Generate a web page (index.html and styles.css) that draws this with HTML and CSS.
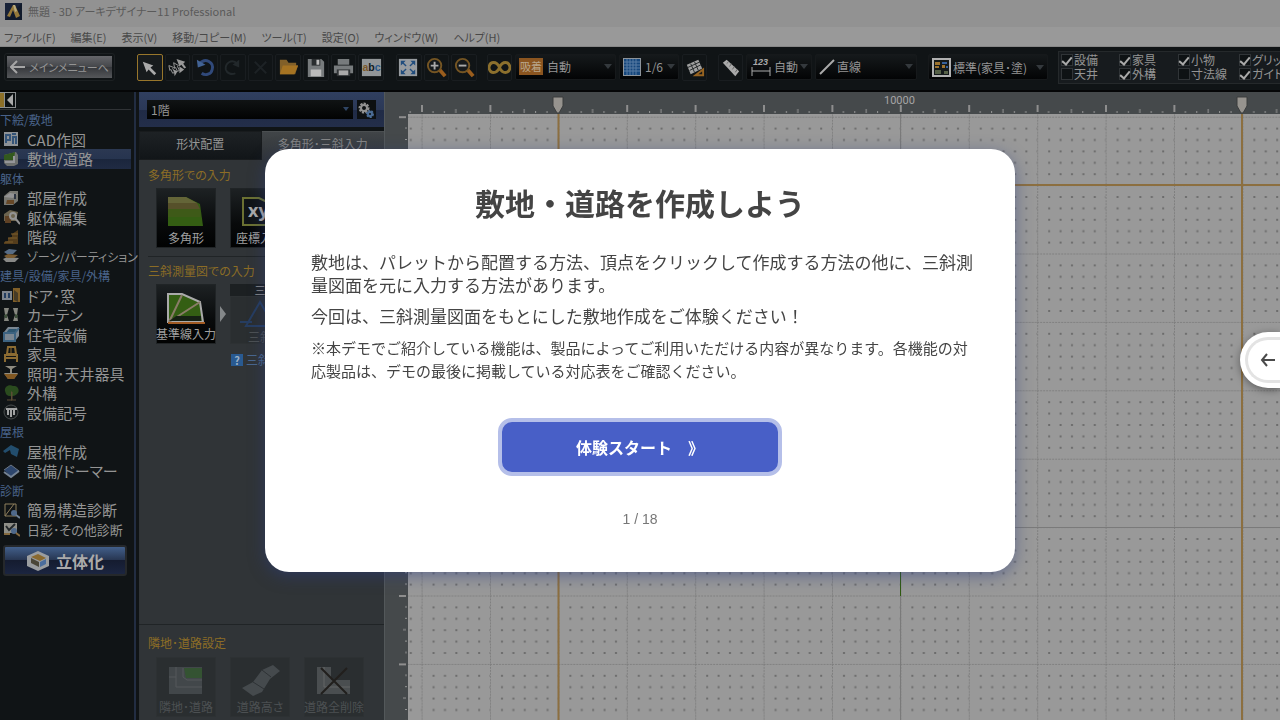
FILE: index.html
```html
<!DOCTYPE html>
<html lang="ja">
<head>
<meta charset="utf-8">
<meta name="viewport" content="width=device-width, initial-scale=1">
<title>無題 - 3D アーキデザイナー11 Professional</title>
<link rel="stylesheet" href="styles.css">
</head>
<body>
<div class="app">
  <header class="titlebar">
    <svg width="17" height="17" viewBox="0 0 17 17"><rect width="17" height="17" fill="#111a2b"/><path d="M0 0h17L0 17z" fill="#182238"/><path d="M8 2 2 13l3 1 3-7 3 8 4-2L10 2z" fill="#94783a"/><path d="m8 2 2 0 2 6-2 1z" fill="#b8ab80"/></svg>
    <span>無題 - 3D アーキデザイナー11 Professional</span>
  </header>
  <nav class="menubar">
    <button>ファイル(F)</button><button>編集(E)</button><button>表示(V)</button><button>移動/コピー(M)</button><button>ツール(T)</button><button>設定(O)</button><button>ウィンドウ(W)</button><button>ヘルプ(H)</button>
  </nav>
  <div class="toolbar">
    <div class="home-frame"><button class="home"><svg width="15" height="14" viewBox="0 0 15 14"><path d="M7 1 1 7l6 6M1 7h14" fill="none" stroke="#a5a5a5" stroke-width="2"/></svg>メインメニューへ</button></div>
    <div class="tools tools-main">
      <button class="tool on" aria-label="選択"><svg viewBox="0 0 24 24"><path d="m5 6 11 4-3 2 6 6-2 2-6-6-2 3z" fill="#aaa"/></svg></button>
      <button class="tool" aria-label="複数選択"><svg viewBox="0 0 24 24"><path d="m3 10 5 2-1 1 2 4-2 1-2-4-1 1zM8 7l5 3-1 1 2 4-2 1-2-4-1 1z" fill="none" stroke="#999"/><path d="m11 3 9 3-2 2 3 4-2 1-3-4-2 2zM8 14l4 2-3 5zM14 11l5 3-5 4z" fill="#999"/></svg></button>
      <button class="tool" aria-label="元に戻す"><svg viewBox="0 0 24 24"><path d="M6 8c6-7 15-1 13 6-1 5-7 7-11 4" fill="none" stroke="#30497a" stroke-width="3"/><path d="m3 4 1 8 8-3z" fill="#426395"/></svg></button>
      <button class="tool" aria-label="やり直し"><svg viewBox="0 0 24 24"><path d="M17 8C11 2 4 8 5 14c1 4 6 6 10 4" fill="none" stroke="#22282b" stroke-width="2"/><path d="m19 4 0 8-7-3z" fill="#22282b"/></svg></button>
      <button class="tool" aria-label="削除"><svg viewBox="0 0 24 24"><path d="m6 6 12 12M18 6 6 18" stroke="#1d2225" stroke-width="2"/></svg></button>
      <button class="tool" aria-label="開く"><svg viewBox="0 0 24 24"><path d="M3 19V4h7l2 3h8v3h2l-3 9z" fill="#826029"/><path d="m3 19 3-9h16l-4 9z" fill="#a57322"/></svg></button>
      <button class="tool" aria-label="保存"><svg viewBox="0 0 24 24"><path d="M4 3h14l3 3v16H4z" fill="#777b7d"/><path d="M8 3h9v7H8z" fill="#292d2f"/><path d="M13 4h3v5h-3zM7 14h11v7H7z" fill="#bbb"/></svg></button>
      <button class="tool" aria-label="印刷"><svg viewBox="0 0 24 24"><path d="M6 3h12v6H6zM2 10h20v8H2z" fill="#777b7d"/><path d="M5 14h14v7H5z" fill="#303436"/><path d="M7 15h10v5H7z" fill="#aaa"/></svg></button>
      <button class="tool" aria-label="文字"><svg viewBox="0 0 24 24"><rect x="2" y="3" width="20" height="18" fill="#929698"/><text x="12" y="16" text-anchor="middle" font-size="11" font-weight="bold" font-family="Liberation Sans"><tspan fill="#7c5828">a</tspan><tspan fill="#111b20">b</tspan><tspan fill="#28588a">c</tspan></text></svg></button>
    </div>
    <div class="tools tools-zoom">
      <button class="tool" aria-label="全体表示"><svg viewBox="0 0 24 24"><rect x="2" y="3" width="19" height="18" fill="#989ca0"/><path d="M4 10V5h5L7 7l3 3-1 1-3-3zM19 10V5h-5l2 2-3 3 1 1 3-3zM4 14v5h5l-2-2 3-3-1-1-3 3zM19 14v5h-5l2-2-3-3 1-1 3 3z" fill="#214d7d"/></svg></button>
      <button class="tool" aria-label="拡大"><svg viewBox="0 0 24 24"><path d="m15 14 6 7" stroke="#9a5d1d" stroke-width="4"/><circle cx="10" cy="10" r="7" fill="#161a1c" stroke="#755523" stroke-width="2"/><path d="M6 10h8M10 6v8" stroke="#aaa" stroke-width="2"/></svg></button>
      <button class="tool" aria-label="縮小"><svg viewBox="0 0 24 24"><path d="m15 14 6 7" stroke="#9a5d1d" stroke-width="4"/><circle cx="10" cy="10" r="7" fill="#161a1c" stroke="#755523" stroke-width="2"/><path d="M6 10h8" stroke="#aaa" stroke-width="2"/></svg></button>
    </div>
    <div class="snap">
      <button class="tool" aria-label="連続"><svg viewBox="0 0 24 24"><path d="M12 12C9 5 2 5 1 12c1 7 8 7 11 0s10-7 11 0c-1 7-8 7-11 0z" fill="none" stroke="#8c702d" stroke-width="3"/></svg></button>
      <div class="combo combo-snap"><b class="badge">吸着</b><select aria-label="吸着"><option>自動</option></select></div>
      <div class="combo combo-grid"><svg width="18" height="18" viewBox="0 0 18 18"><rect width="18" height="18" fill="#8d949b"/><rect x="1" y="1" width="16" height="16" fill="#16477c"/><path d="M4 1v16M7 1v16M10 1v16M13 1v16M1 4h16M1 7h16M1 10h16M1 13h16" stroke="#587da3"/></svg><select aria-label="グリッド"><option>1/6</option></select></div>
      <button class="tool" aria-label="グリッド回転"><svg viewBox="0 0 24 24"><path d="m4 9 12-5 4 9-12 6z" fill="#a0a0a0"/><path d="m5 12 13-6M7 15l12-6M8 8l4 9M12 6l4 9" stroke="#25292b"/><path d="M13 20h8v-6z" fill="#16191b" stroke="#976321" stroke-width="2"/></svg></button>
    </div>
    <div class="measure">
      <button class="tool" aria-label="定規"><svg viewBox="0 0 24 24"><path d="m4 7 4-3 13 12-4 5z" fill="#aaa"/><path d="m10 6-2 2m5 0-2 3m5 0-2 3m5 0-2 3" stroke="#666"/></svg></button>
      <div class="combo combo-dim"><svg width="22" height="20" viewBox="0 0 22 20"><text x="3" y="8" font-size="9" font-style="italic" font-weight="bold" font-family="Liberation Sans" fill="#aaa">123</text><path d="M2 10v9M20 10v9M2 14h18" stroke="#aaa"/></svg><select aria-label="寸法"><option>自動</option></select></div>
      <div class="combo combo-line"><svg width="16" height="16" viewBox="0 0 16 16"><path d="M1 15 15 1" stroke="#aaa" stroke-width="2"/></svg><select aria-label="線種"><option>直線</option></select></div>
    </div>
    <div class="combo combo-view"><svg width="19" height="19" viewBox="0 0 19 19"><rect x="1" y="1" width="17" height="17" fill="#14191a" stroke="#b1b1b1" stroke-width="2"/><path d="M3 4h5v3H3zM3 8h4v2H3zM10 7h3v3h-3z" fill="#9e742f"/><path d="M10 4h5v2h-5zM14 8h2v2h-2z" fill="#36619c"/><path d="M3 12h6v4H3zM12 13h4v3h-4z" fill="#566147"/></svg><select aria-label="表示設定"><option>標準(家具･塗)</option></select></div>
    <fieldset class="checks" aria-label="表示要素">
      <label><input type="checkbox" checked>設備</label><label><input type="checkbox" checked>家具</label><label><input type="checkbox" checked>小物</label><label><input type="checkbox" checked>グリッド</label>
      <label><input type="checkbox">天井</label><label><input type="checkbox" checked>外構</label><label><input type="checkbox">寸法線</label><label><input type="checkbox" checked>ガイド</label>
    </fieldset>
  </div>

  <div class="work">
    <aside class="sidebar">
      <div class="fold"><button aria-label="折りたたむ"><svg width="16" height="16" viewBox="0 0 16 16"><rect width="16" height="16" fill="#8b8e90"/><rect y="1" width="4" height="14" fill="#8d7028"/><rect x="5" y="1" width="10" height="14" fill="#0c1012"/><path d="m13 2-6 6 6 6z" fill="#aaa"/></svg></button></div>
      <div class="steps">
      <h2>下絵/敷地</h2>
      <button class="item"><svg viewBox="0 0 18 18"><path d="M2 2h14v14H2z" fill="#a4a9ad"/><path d="M4 13V5h4v5H4M11 14V7h3v7M10 4h4" fill="none" stroke="#3b608a" stroke-width="2"/></svg>CAD作図</button>
      <button class="item active"><svg viewBox="0 0 18 18"><path d="m2 5 12-3 2 3v9l-4 2H5l-3-3z" fill="#7c7d77"/><path d="m2 5 11-3-1 8H2z" fill="#356016"/><path d="M3 12h9V6" fill="none" stroke="#aaa" stroke-width="2"/></svg>敷地/道路</button>
      <h2>躯体</h2>
      <button class="item"><svg viewBox="0 0 18 18"><path d="m2 7 6-5h8v10l-5 4H2z" fill="#8a8981"/><path d="m2 8 6-4 7 1-4 4z" fill="#aaa"/><path d="M5 11h7v4H4z" fill="#77522b"/><path d="M13 5v5" stroke="#343d4b" stroke-width="2"/></svg>部屋作成</button>
      <button class="item"><svg viewBox="0 0 18 18"><path d="m2 6 6-4 8 2-2 9H2z" fill="#7d735a"/><path d="M3 8h6v7H3z" fill="#6d4927"/><circle cx="11" cy="8" r="3" fill="none" stroke="#aaa" stroke-width="2"/><path d="m13 10 5 6" stroke="#aaa" stroke-width="2"/></svg>躯体編集</button>
      <button class="item"><svg viewBox="0 0 18 18"><path d="M2 16V14l4-1v-3l4-1V6l6-4v14z" fill="#60451e"/><path d="M3 14h8M6 10h9M9 6h7" stroke="#8e6a30" stroke-width="1"/></svg>階段</button>
      <button class="item long"><svg viewBox="0 0 18 18"><path d="m1 12 4-2 12 1-4 4H4z" fill="#9d9e9b"/><path d="m2 9 4-2 10 1-4 3H5z" fill="#8d6938"/><path d="m2 5 5-3 8 1-4 4H5z" fill="#647c99"/></svg>ゾーン/パーティション</button>
      <h2>建具/設備/家具/外構</h2>
      <button class="item"><svg viewBox="0 0 18 18"><path d="M0 5h10v9H0z" fill="#9098a2"/><path d="M2 7h2v5H2zM6 7h2v5H6z" fill="#26456d"/><path d="M11 2h7v14h-7z" fill="#936c2c"/><path d="m12 4 4 3v9l-4-2z" fill="#50422a"/></svg>ドア･窓</button>
      <button class="item"><svg viewBox="0 0 18 18"><path d="M2 2h5l-2 7 2 6H2l1-6zM11 2h5l-1 7 1 6h-5l2-6z" fill="#9b9c93"/><path d="m2 9 3-1v4H3zM16 9l-3-1v4h2z" fill="#455b42"/></svg>カーテン</button>
      <button class="item"><svg viewBox="0 0 18 18"><path d="m2 7 4-5h11v9l-4 5H2z" fill="#8e9ca8"/><path d="m4 8 3-4h8l-2 4z" fill="#33617f"/><path d="M2 8h11v8H2zM13 8l4-5" fill="none" stroke="#467194" stroke-width="2"/></svg>住宅設備</button>
      <button class="item"><svg viewBox="0 0 18 18"><path d="M6 2h7l1 7H5zM3 10h12v3H3zM3 13v4M15 13v4" fill="none" stroke="#a17b38" stroke-width="2"/><path d="M9 3v6" stroke="#a17b38"/></svg>家具</button>
      <button class="item"><svg viewBox="0 0 18 18"><path d="M3 2h12l-5 3v4h6l-4 6H6L2 9h6V5z" fill="#a4a093"/><path d="M2 10h14l-4 5H6z" fill="#966425"/></svg>照明･天井器具</button>
      <button class="item"><svg viewBox="0 0 18 18"><path d="M3 7c-1-4 4-7 8-5 6-1 7 6 4 8-3 3-9 3-11 0z" fill="#2f5520"/><path d="M9 8h1v8H9M5 16h9" fill="#6b593c" stroke="#6b593c"/></svg>外構</button>
      <button class="item"><svg viewBox="0 0 18 18"><circle cx="9" cy="9" r="7" fill="#171b1c" stroke="#555959"/><path d="M4 6h11M6 7v5M9 7v7M12 7v5" stroke="#bcbcbc" stroke-width="2"/></svg>設備記号</button>
      <h2>屋根</h2>
      <button class="item"><svg viewBox="0 0 18 18"><path d="m1 9 8-6 8 4-2 8-6-3-1-4-5 3z" fill="#26587d"/></svg>屋根作成</button>
      <button class="item"><svg viewBox="0 0 18 18"><path d="m2 8 7-5 8 6-8 6z" fill="#334f7d"/><path d="m2 8 7-5 8 6" fill="none" stroke="#7b8797"/><path d="m2 10 7 5 8-6" fill="none" stroke="#8797aa" stroke-width="2"/></svg>設備/ドーマー</button>
      <h2>診断</h2>
      <button class="item"><svg viewBox="0 0 18 18"><path d="M3 3h11v12H3zM3 15 12 3" fill="none" stroke="#a6936b"/><circle cx="12" cy="12" r="3" fill="#5a789f"/><path d="m14 14 4 3" stroke="#8196ae" stroke-width="2"/></svg>簡易構造診断</button>
      <button class="item"><svg viewBox="0 0 18 18"><path d="M2 3h13v10H2z" fill="#a5a49b"/><path d="m4 6 3 4 6-6" fill="none" stroke="#272c2e" stroke-width="2"/><circle cx="12" cy="11" r="3" fill="#5a789f"/><path d="m14 13 4 3M2 14h6" stroke="#9a7945" stroke-width="2"/></svg>日影･その他診断</button>
      </div>
      <button class="solid"><svg width="24" height="22" viewBox="0 0 24 22"><path d="m1 6 11-5 11 5v10l-11 5-11-5z" fill="#9a9da0"/><path d="m5 7 7-3 8 4-6 3z" fill="#89692f"/><path d="m5 8 8 4v5l-8-4z" fill="#4a4638"/><path d="m14 12 6-3v5l-6 3z" fill="#4b6d9c"/></svg>立体化</button>
    </aside>

    <section class="panel">
      <div class="floor"><select aria-label="階"><option>1階</option></select><button aria-label="設定"><svg width="18" height="18" viewBox="0 0 18 18"><circle cx="7" cy="7" r="4" fill="none" stroke="#929292" stroke-width="3" stroke-dasharray="2 1"/><circle cx="7" cy="7" r="3" fill="none" stroke="#929292" stroke-width="2"/><circle cx="13" cy="13" r="3" fill="none" stroke="#4b6c96" stroke-width="2" stroke-dasharray="2 1"/><circle cx="13" cy="13" r="2" fill="none" stroke="#4b6c96" stroke-width="2"/></svg></button></div>
      <div class="tabs"><button>形状配置</button><button class="current">多角形･三斜入力</button></div>
      <div class="palette">
        <h3>多角形での入力</h3>
        <div class="tiles">
          <button class="tile"><svg viewBox="0 0 40 34"><path d="M2 2h18l14 7 3 22H2z" fill="#345e13"/><path d="M2 2h18l11 6H2z" fill="#646538"/><path d="M2 8h29l3 6H2z" fill="#56502a"/><path d="M2 14h32l1 8H2z" fill="#3e5a18"/></svg>多角形</button>
          <button class="tile"><svg viewBox="0 0 40 34"><path d="M3 3h16l14 7 3 20H3z" fill="#101416" stroke="#6b7132" stroke-width="2"/><text x="8" y="22" font-size="18" font-weight="bold" font-family="Open Sans, sans-serif" fill="#aaa">xy</text></svg>座標入力</button>
        </div>
        <h3 class="second">三斜測量図での入力</h3>
        <div class="tiles">
          <button class="tile"><svg viewBox="0 0 40 34"><path d="M2 3h14l18 8 3 20H2z" fill="#345e13" stroke="#aaa" stroke-width="2"/><path d="m3 31 13-27M3 31 34 11" stroke="#8a7c68" stroke-width="2"/><path d="M10 25h25v5H3z" fill="#162014"/><path d="M2 32h37" stroke="#a15a22" stroke-width="2"/></svg>基準線入力</button>
          <svg class="next" width="6" height="16" viewBox="0 0 6 16"><path d="m0 0 6 8-6 8z" fill="#84888a"/></svg>
          <div class="stack"><span>　三斜</span><button class="tile off"><svg viewBox="0 0 40 34"><path d="M6 29 20 5l14 24zM0 25h12" fill="none" stroke="#263d60" stroke-width="2"/></svg>三斜</button></div>
        </div>
        <a class="help" href="#"><b>?</b>三斜</a>
      </div>
      <div class="settings">
        <h3>隣地･道路設定</h3>
        <div class="tiles">
          <button class="tile off"><svg viewBox="0 0 40 34"><path d="M3 3h33v27H3z" fill="#42474a"/><path d="M18 4h18v10H20z" fill="#345332"/><path d="M3 13h7V3M10 13v10h26M17 4v9l4 3h15" fill="none" stroke="#55595a"/></svg>隣地･道路</button>
          <button class="tile off"><svg viewBox="0 0 40 34"><path d="M2 24 13 18 22 6 33 1 40 7 30 15 22 28 13 32z" fill="#454a4d"/><path d="m13 18 11 7M22 6l9 7" stroke="#2e3235"/></svg>道路高さ</button>
          <button class="tile off"><svg viewBox="0 0 40 34"><path d="M3 3h14v13h19v14H3z" fill="#4a4e50"/><path d="M10 3v20h26" fill="none" stroke="#626465"/><path d="m7 4 26 26M33 4 7 30" stroke="#211f1d" stroke-width="2"/></svg>道路全削除</button>
        </div>
      </div>
    </section>

    <main class="drawing">
      <svg width="100%" height="100%" role="img" aria-label="敷地図面">
        <defs>
          <pattern id="grid" patternUnits="userSpaceOnUse" x="36.6" y="24.7" width="68.4" height="68.4">
            <path d="M.5 0v68.4M0 .5h68.4" stroke="#7f7f7f" stroke-dasharray="2 1" fill="none"/>
            <path d="M11 11.9h58M11 23.3h58M11 34.7h58M11 46.1h58M11 57.5h58" stroke="#6c6c6c" stroke-width="2" stroke-dasharray="2 9.4"/>
          </pattern>
          <pattern id="top-ticks" patternUnits="userSpaceOnUse" x="36" y="0" width="68.4" height="22">
            <path d="M1 13v7" stroke="#8e8e8e" stroke-width="2"/><path d="M12 19v2M23.4 19v2M34.8 17v4M46.2 19v2M57.6 19v2" stroke="#969696"/>
          </pattern>
          <pattern id="side-ticks" patternUnits="userSpaceOnUse" x="0" y="24.2" width="23" height="68.4">
            <path d="M14 1h7" stroke="#8e8e8e" stroke-width="2"/><path d="M20 12h2M20 23.4h2M18 34.8h3M20 46.2h2M20 57.6h2" stroke="#969696"/>
          </pattern>
        </defs>
        <rect width="100%" height="100%" fill="#45494b"/>
        <rect x="23" y="22" width="100%" height="100%" fill="#999"/>
        <rect x="23" y="22" width="100%" height="100%" fill="url(#grid)"/>
        <rect x="23" width="100%" height="22" fill="url(#top-ticks)"/>
        <rect y="22" width="23" height="100%" fill="url(#side-ticks)"/>
        <path d="M515.5 22v700M23 435.5h1000" stroke="#7a7a7a"/>
        <path d="M515.5 430v74" stroke="#2f5a10"/>
        <path d="M173.5 22v700M857 22v700M23 93h1000" stroke="#8c6f40" stroke-width="2"/>
        <path d="M168 5h10v9l-4 7h-2l-4-7zM852 5h10v9l-4 7h-2l-4-7z" fill="#96938e" stroke="#3a3c3d"/>
        <text x="499" y="12" font-size="11" fill="#a5a5a5" font-family="Roboto, sans-serif">10000</text>
      </svg>
    </main>
  </div>
</div>

<div class="overlay">
  <section class="dialog" role="dialog" aria-labelledby="dialog-title">
    <h1 id="dialog-title">敷地・道路を作成しよう</h1>
    <div class="copy">
      <p>敷地は、パレットから配置する方法、頂点をクリックして作成する方法の他に、三斜測量図面を元に入力する方法があります。</p>
      <p>今回は、三斜測量図面をもとにした敷地作成をご体験ください！</p>
      <p class="note">※本デモでご紹介している機能は、製品によってご利用いただける内容が異なります。各機能の対応製品は、デモの最後に掲載している対応表をご確認ください。</p>
    </div>
    <button class="start">体験スタート　》</button>
    <div class="count">1 / 18</div>
  </section>
</div>
<button class="drawer" aria-label="メニューを開く"><span><svg width="16" height="14" viewBox="0 0 16 14"><path d="M7 1 2 7l5 6M2 7h13" fill="none" stroke="#4a4a4a" stroke-width="2"/></svg></span></button>
</body>
</html>
```
FILE: styles.css
```css
* { box-sizing: border-box; }
body { margin: 0; font-family: "Liberation Sans", "Noto Sans CJK JP", sans-serif; color: #444; }
button, select, input { font: inherit; color: inherit; margin: 0; }
button { border: 0; padding: 0; background: none; cursor: pointer; }
h1, h2, h3, p { margin: 0; }
svg { flex: none; display: block; }

.app { display: flex; flex-direction: column; height: 100vh; min-height: 600px; overflow: hidden; background: #101416; color: #949494; font-family: "Noto Sans CJK JP", sans-serif; font-size: 12px; font-feature-settings: "palt"; white-space: nowrap; }
.titlebar { flex: none; height: 27px; padding: 0 5px 5px; display: flex; align-items: center; gap: 6px; background: #929292; color: #5a5a5a; font-size: 11px; }
.menubar { flex: none; height: 20px; padding: 0 4px; display: flex; align-items: center; gap: 15px; background: #999; color: #484848; border-bottom: 1px solid #878787; font-size: 11px; }

.toolbar { flex: none; height: 45px; display: flex; align-items: center; padding: 0 0 3px 4px; background: #101416; border-bottom: 2px solid #050607; }
.home-frame { flex: none; padding: 2px; border: 1px solid #1c2022; border-radius: 3px; width: 111px; margin-right: 22px; }
.home { width: 100%; height: 22px; display: flex; align-items: center; justify-content: center; gap: 4px; background: linear-gradient(#65666a, #44464a 50%, #35373b 50%, #55575a); color: #949494; font-size: 11px; }
.tools { flex: none; display: grid; gap: 2px; }
.tools-main { grid-template-columns: repeat(9, 1fr); width: 247px; margin-right: 12px; }
.tools-zoom { grid-template-columns: repeat(3, 1fr); width: 81px; margin-right: 10px; }
.tool { flex: none; min-width: 25px; height: 27px; border: 1px solid #191d20; border-radius: 2px; display: grid; place-items: center; }
.tool svg { width: 23px; height: 23px; }
.tool.on { border: 1px solid #98762b; background: #171b1d; }
.snap, .measure { flex: none; display: flex; gap: 3px; margin-right: 11px; }
.combo { flex: none; height: 26px; display: flex; align-items: center; gap: 4px; padding: 0 3px; border: 1px solid #16191b; border-radius: 2px; background: linear-gradient(#15191b, #030405); font-size: 12px; }
.combo select { flex: 1; min-width: 0; }
select { appearance: none; border: 0; border-radius: 0; padding: 0; background: none; outline: 0; }
.combo::after, .floor::after { content: ""; width: 0; border: 4px solid transparent; border-top: 5px solid #34393d; border-bottom: 0; }
.combo-snap { width: 101px; }
.combo-grid { width: 60px; }
.combo-dim { width: 66px; gap: 2px; }
.combo-line { width: 102px; gap: 2px; }
.combo-view { width: 120px; gap: 2px; margin-right: 10px; }
.badge { padding: 0 1px; font-size: 11px; line-height: 17px; font-weight: 400; background: #8b5520; color: #b8a489; }
.checks { flex: none; margin: 0; min-width: 0; padding: 2px; border: 1px solid #25292b; background: #171b1e; display: grid; grid-template-columns: 58px 59px 61px 60px; align-content: center; height: 33px; font-size: 12px; line-height: 14px; }
.checks label { display: flex; align-items: center; gap: 1px; height: 14px; }
.checks input { appearance: none; width: 12px; height: 12px; border: 1px solid #303437; background: #0e1214; display: grid; place-items: center; }
.checks input:checked::after { content: ""; width: 4px; height: 8px; margin-bottom: 3px; border: solid #aaa; border-width: 0 2px 2px 0; transform: rotate(40deg); }

.work { flex: 1; min-height: 0; display: flex; }
.sidebar { flex: none; width: 136px; border-right: 2px solid #222d42; }
.fold { height: 18px; width: 131px; border-bottom: 1px solid #303336; }
.steps { display: grid; grid-auto-rows: 1fr; height: 429px; }
.sidebar h2 { font-size: 12px; line-height: 19px; font-weight: 400; color: #49638a; }
.item { width: 131px; min-height: 0; display: flex; align-items: center; gap: 7px; padding-left: 2px; font-size: 15px; line-height: 19px; text-align: left; }
.item.long { font-size: 12px; }
.item:last-child { font-size: 13px; }
.item svg { width: 18px; height: 18px; opacity: .85; }
.item.active { background: linear-gradient(#2b3852, #26344f 50%, #1b263c 50%, #202b43); }
.solid { width: 124px; height: 31px; margin: 6px 0 0 3px; display: flex; align-items: center; justify-content: center; gap: 6px; border: 2px solid #25282b; border-radius: 3px; background: linear-gradient(#425f8a, #26344f 50%, #151c30 50%, #1b2540); font-size: 16px; font-weight: 700; color: #aaa; }

.panel { flex: none; width: 249px; padding-left: 3px; display: flex; flex-direction: column; border-right: 1px solid #53585a; }
.floor { flex: none; position: relative; height: 35px; display: flex; align-items: center; gap: 4px; padding: 0 8px; background: linear-gradient(#303f60, #2b3857 50%, #202b46 50%, #232e4a); }
.floor select { flex: 1; height: 19px; padding-left: 4px; background: linear-gradient(#101314, #020303); line-height: 19px; }
.floor button { width: 19px; height: 19px; background: #0d1012; }
.floor::after { position: absolute; right: 35px; top: 15px; border-width: 4px 3px 0; border-top-color: #2f4565; }
.tabs { flex: none; margin-top: 4px; height: 29px; display: grid; grid-template-columns: 1fr 1fr; }
.tabs button { padding-bottom: 5px; background: linear-gradient(#1e2225, #111518); border: 1px solid #181b1d; font-size: 12px; }
.tabs .current { background: linear-gradient(#414548, #303437); border: 0; border-top: 1px solid #4b4f51; color: #858585; }
.palette { flex: 1; min-height: 0; padding: 5px 0 0 9px; background: #303437; overflow: hidden; }
.panel h3 { height: 20px; font-size: 12px; line-height: 20px; font-weight: 400; color: #8c6d26; }
.panel h3.second { margin-top: 8px; padding-top: 4px; height: 25px; border-top: 1px solid #202426; }
.tiles { display: flex; gap: 14px; padding: 3px 0 0 8px; }
.tile { flex: none; width: 60px; height: 60px; display: flex; flex-direction: column; align-items: center; padding-top: 6px; border: 1px solid #202426; background: linear-gradient(#1d2123, #080a0b 60%, #010202); font-size: 12px; line-height: 18px; color: #a0a0a0; }
.tile svg { width: 40px; height: 34px; }
.tile.off { background: #2a2e30; border-color: #2d3133; color: #4c5052; }
.next { align-self: center; margin: 0 -10px; }
.stack span { display: block; width: 60px; height: 12px; line-height: 12px; text-align: center; font-size: 11px; background: #1c2022; }
.stack .tile { height: 48px; padding-top: 0; line-height: 12px; }
.help { margin: 7px 0 0 83px; display: flex; align-items: center; gap: 3px; color: #49678f; text-decoration: none; font-size: 12px; }
.help b { width: 12px; height: 12px; line-height: 12px; text-align: center; background: #295a91; color: #9cb0c5; font-size: 11px; }
.settings { flex: none; padding: 8px 0 3px 9px; background: #303437; border-top: 1px solid #202426; }
.settings .tiles { padding-top: 4px; }
.drawing { flex: 1; min-width: 0; overflow: hidden; }

.overlay { position: fixed; inset: 0; display: flex; align-items: center; justify-content: center; padding: 0 16px; }
.dialog { width: 750px; max-width: 100%; padding: 36px 40px 43px; display: flex; flex-direction: column; align-items: center; background: #fff; border-radius: 24px; box-shadow: 0 4px 16px rgba(44, 62, 128, .5); }
.dialog h1 { font-size: 30px; line-height: 40px; }
.copy { width: 100%; padding-left: 6px; margin-top: 27px; display: flex; flex-direction: column; gap: 8px; font-size: 17px; line-height: 23px; }
.note { font-size: 15px; }
.start { width: 284px; max-width: 100%; height: 58px; margin-top: 35px; border: 4px solid #b5bfe9; border-radius: 14px; background: #485fc7; color: #fff; font-size: 16px; font-weight: 700; }
.count { margin-top: 33px; font-size: 14px; line-height: 20px; color: #777; }
.drawer { position: fixed; right: 0; top: 50%; margin-top: -28px; width: 40px; height: 56px; padding: 5px 0 5px 5px; border-radius: 28px 0 0 28px; background: #fff; box-shadow: 0 2px 8px rgba(0, 0, 0, .4); }
.drawer span { display: flex; align-items: center; height: 100%; padding-left: 12px; border: 3px solid #e3e3e3; border-right: 0; border-radius: 23px 0 0 23px; }
```
